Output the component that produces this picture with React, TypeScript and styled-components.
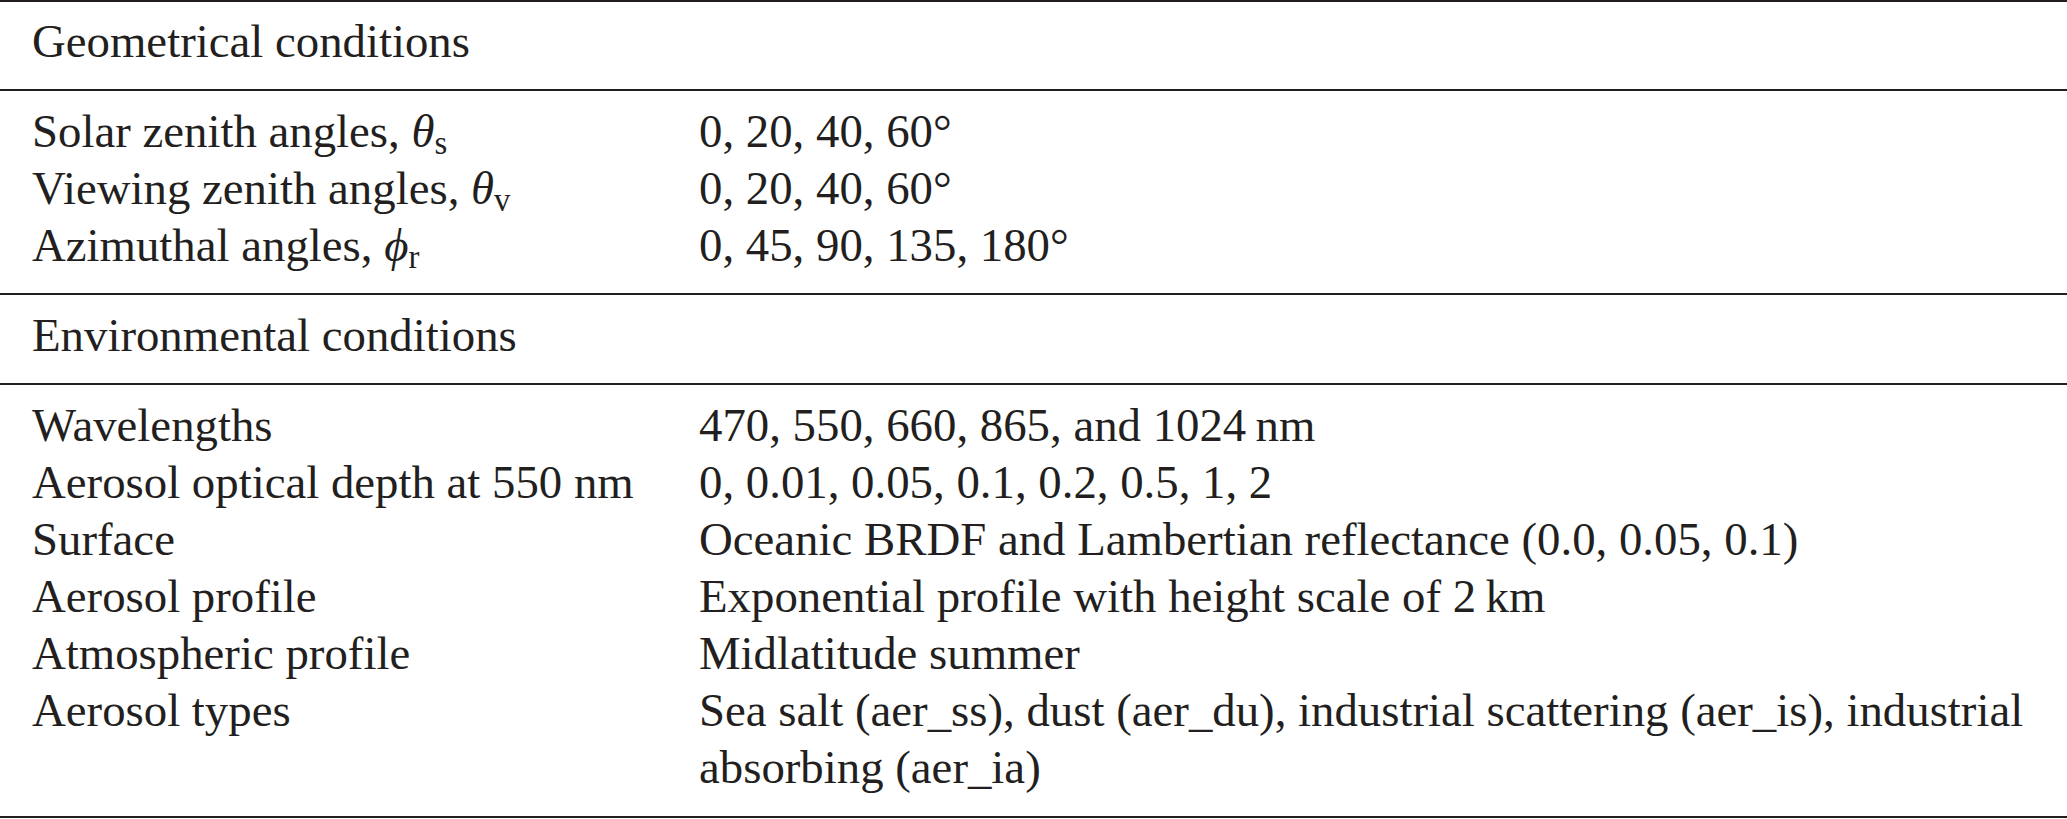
import React from "react"
import styled, { createGlobalStyle } from "styled-components"

const GlobalStyle = createGlobalStyle`
	body{
		margin: 0;
		background: #fff;
	}
`

const Table = styled.div`
	width: 2067px;
	font-family: "Liberation Serif", "Times New Roman", serif;
	font-size: 46.8px;
	line-height: 57px;
	color: #231f20;
	border-bottom: 2px solid #231f20;
`

const Section = styled.div<{ $pad: string }>`
	border-top: 2px solid #231f20;
	padding: ${p => p.$pad};
`

const Row = styled.div`
	display: grid;
	grid-template-columns: 667px 1fr;
`

const Cell = styled.div`
	white-space: nowrap;
`

const Sym = styled.i`
	font-style: italic;
`

const Sub = styled.sub`
	font-size: 0.7em;
	line-height: 0;
	vertical-align: -0.22em;
	font-style: normal;
`

type RowData = [React.ReactNode, React.ReactNode]

const geometry: RowData[] = [
	[<>Solar zenith angles, <Sym>θ</Sym><Sub>s</Sub></>, "0, 20, 40, 60°"],
	[<>Viewing zenith angles, <Sym>θ</Sym><Sub>v</Sub></>, "0, 20, 40, 60°"],
	[<>Azimuthal angles, <Sym>ϕ</Sym><Sub>r</Sub></>, "0, 45, 90, 135, 180°"],
]

const environment: RowData[] = [
	["Wavelengths", "470, 550, 660, 865, and 1024\u2009nm"],
	["Aerosol optical depth at 550 nm", "0, 0.01, 0.05, 0.1, 0.2, 0.5, 1, 2"],
	["Surface", "Oceanic BRDF and Lambertian reflectance (0.0, 0.05, 0.1)"],
	["Aerosol profile", "Exponential profile with height scale of 2\u2009km"],
	["Atmospheric profile", "Midlatitude summer"],
	["Aerosol types", <>Sea salt (aer_ss), dust (aer_du), industrial scattering (aer_is), industrial<br />absorbing (aer_ia)</>],
]

const Rows = ({ data }: { data: RowData[] }) => (
	<>
		{data.map(([k, v], i) => (
			<Row key={i}>
				<Cell>{k}</Cell>
				<Cell>{v}</Cell>
			</Row>
		))}
	</>
)

export default function App() {
	return (
		<>
			<GlobalStyle />
			<Table>
				<Section $pad="11px 32px 19px">Geometrical conditions</Section>
				<Section $pad="12px 32px 19px">
					<Rows data={geometry} />
				</Section>
				<Section $pad="12px 32px 19px">Environmental conditions</Section>
				<Section $pad="12px 32px 20px">
					<Rows data={environment} />
				</Section>
			</Table>
		</>
	)
}
